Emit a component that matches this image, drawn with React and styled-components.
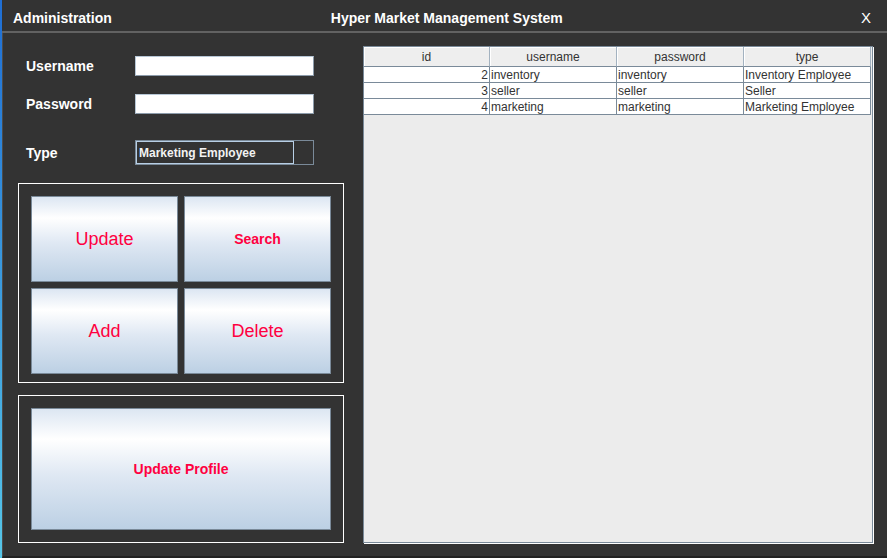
import React from 'react';
import styled, { createGlobalStyle } from 'styled-components';

const GlobalStyle = createGlobalStyle`
    html, body {
        margin: 0;
        padding: 0;
        background: #333333;
    }
    * {
        box-sizing: border-box;
    }
`;

const Window = styled.div`
    width: 887px;
    height: 558px;
    background: #333333;
    border-left: 2px solid;
    border-image: linear-gradient(#1f6ed4, #56c6e8) 1;
    display: flex;
    flex-direction: column;
    font-family: 'Liberation Sans', Arial, sans-serif;
    overflow: hidden;
`;

const TitleBar = styled.div`
    height: 33px;
    flex-shrink: 0;
    display: flex;
    align-items: center;
    padding: 4px 16px 0 11px;
    color: #ffffff;
    font-size: 14px;
    font-weight: 700;
    border-bottom: 2px solid #626262;
`;

const AppTitle = styled.span`
    margin-left: 219px;
`;

const Close = styled.span`
    margin-left: auto;
    font-size: 15px;
    font-weight: 400;
`;

const Body = styled.div`
    flex: 1;
    display: flex;
    border-left: 1px solid #4c4c4c;
    border-bottom: 2px solid #222222;
    padding-left: 15px;
`;

const LeftColumn = styled.div`
    width: 326px;
    display: flex;
    flex-direction: column;
    padding-top: 23px;
`;

const FieldRow = styled.div`
    display: flex;
    align-items: center;
    height: ${p => p.tall ? '25px' : '20px'};
    margin-top: ${p => p.gap || 0}px;
    padding-left: 8px;
`;

const Label = styled.label`
    width: 109px;
    color: #ffffff;
    font-size: 14px;
    font-weight: 700;
`;

const TextInput = styled.div`
    width: 179px;
    height: 20px;
    background: #ffffff;
    border: 1px solid #8d9cab;
    border-top-color: #b7c7d6;
    border-left-color: #b7c7d6;
`;

const Combo = styled.div`
    width: 179px;
    height: 25px;
    display: flex;
    border: 1px solid #7a8a99;
`;

const ComboField = styled.div`
    flex: 1;
    display: flex;
    align-items: center;
    padding-left: 2px;
    border: 1px solid #b8cfe5;
    color: #f2f2f2;
    font-size: 12px;
    font-weight: 700;
`;

const ComboArrow = styled.div`
    width: 19px;
`;

const Group = styled.div`
    margin-top: ${p => p.gap}px;
    border: 1px solid #ffffff;
    padding: ${p => p.pad};
    display: grid;
    grid-template-columns: ${p => p.cols};
    grid-auto-rows: ${p => p.rowH}px;
    gap: 6px;
`;

const ActionButton = styled.button`
    border: 1px solid #7a8a99;
    background: linear-gradient(#dce6f2 0%, #ffffff 25%, #dfe8f3 55%, #bcd0e4 100%);
    color: #ff0040;
    font-family: 'Liberation Sans', Arial, sans-serif;
    font-size: ${p => p.bold ? '14px' : '18px'};
    font-weight: ${p => p.bold ? 700 : 400};
    padding: 0;
    cursor: pointer;
`;

const TableWrap = styled.div`
    margin: 13px 0 0 19px;
    width: 510px;
    height: 497px;
    background: #ececec;
    border: 1px solid #7a8a99;
    box-shadow: 1px 1px 0 #ffffff;
`;

const Grid = styled.div`
    display: grid;
    grid-template-columns: 126px 127px 127px 127px;
`;

const HeadCell = styled.div`
    height: 20px;
    display: flex;
    align-items: center;
    justify-content: center;
    background: #eeeeee;
    border-right: 1px solid #a3b2c0;
    border-bottom: 1px solid #7a8a99;
    box-shadow: inset 1px 1px 0 #ffffff;
    color: #333333;
    font-size: 12px;
`;

const Cell = styled.div`
    height: 16px;
    display: flex;
    align-items: center;
    justify-content: ${p => p.right ? 'flex-end' : 'flex-start'};
    padding: 0 1px;
    background: #ffffff;
    border-right: 1px solid #7a8a99;
    border-bottom: 1px solid #7a8a99;
    color: #333333;
    font-size: 12px;
    white-space: nowrap;
`;

const columns = ['id', 'username', 'password', 'type'];

const rows = [
    { id: 2, username: 'inventory', password: 'inventory', type: 'Inventory Employee' },
    { id: 3, username: 'seller', password: 'seller', type: 'Seller' },
    { id: 4, username: 'marketing', password: 'marketing', type: 'Marketing Employee' },
];

const App = () => (
    <Window>
        <GlobalStyle />
        <TitleBar>
            Administration
            <AppTitle>Hyper Market Management System</AppTitle>
            <Close>X</Close>
        </TitleBar>

        <Body>
            <LeftColumn>
                <FieldRow>
                    <Label>Username</Label>
                    <TextInput />
                </FieldRow>
                <FieldRow gap={18}>
                    <Label>Password</Label>
                    <TextInput />
                </FieldRow>
                <FieldRow tall gap={26}>
                    <Label>Type</Label>
                    <Combo>
                        <ComboField>Marketing Employee</ComboField>
                        <ComboArrow />
                    </Combo>
                </FieldRow>

                <Group gap={18} pad="12px 12px 8px 12px" cols="147px 147px" rowH={86}>
                    <ActionButton>Update</ActionButton>
                    <ActionButton bold>Search</ActionButton>
                    <ActionButton>Add</ActionButton>
                    <ActionButton>Delete</ActionButton>
                </Group>

                <Group gap={12} pad="12px" cols="300px" rowH={122}>
                    <ActionButton bold>Update Profile</ActionButton>
                </Group>
            </LeftColumn>

            <TableWrap>
                <Grid>
                    {columns.map(c => <HeadCell key={c}>{c}</HeadCell>)}
                    {rows.map(r => (
                        <React.Fragment key={r.id}>
                            <Cell right>{r.id}</Cell>
                            <Cell>{r.username}</Cell>
                            <Cell>{r.password}</Cell>
                            <Cell>{r.type}</Cell>
                        </React.Fragment>
                    ))}
                </Grid>
            </TableWrap>
        </Body>
    </Window>
);

export default App;
